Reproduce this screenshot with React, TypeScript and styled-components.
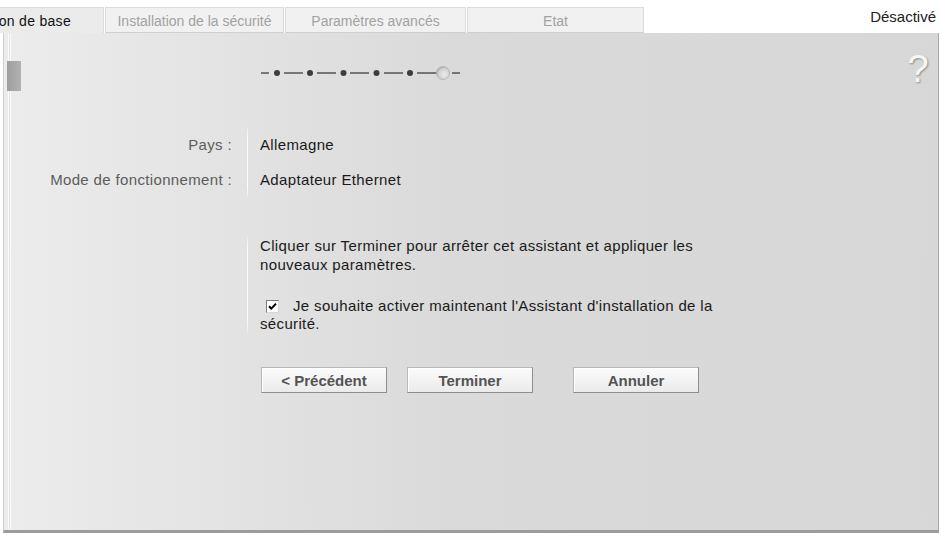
import React from "react";
import styled, { createGlobalStyle } from "styled-components";

const GlobalStyle = createGlobalStyle`
  html, body {
    margin: 0;
    padding: 0;
    background: #fff;
  }
  body {
    font-family: "Liberation Sans", Arial, sans-serif;
    color: #1a1a1a;
  }
`;

const tabs = [
  { name: "Installation de base", width: 104, active: true },
  { name: "Installation de la sécurité", width: 179 },
  { name: "Paramètres avancés", width: 181 },
  { name: "Etat", width: 177 }
];

export default function App() {
  return (
    <>
      <GlobalStyle />
      <Page>
        <TabBar>
          {tabs.map(({ name, width, active }) => (
            <Tab key={name} $active={active} $width={width}>
              {name}
            </Tab>
          ))}
          <Status>Désactivé</Status>
        </TabBar>

        <Panel>
          <Header>
            <Handle />
            <Progress />
            <Help>?</Help>
          </Header>

          <Section>
            <LabelCol>
              <Row>Pays :</Row>
              <Row>Mode de fonctionnement :</Row>
            </LabelCol>
            <Divider />
            <ValueCol>
              <Row $dark>Allemagne</Row>
              <Row $dark>Adaptateur Ethernet</Row>
            </ValueCol>
          </Section>

          <Section $top={32} $pad="7px 0 12px 0">
            <LabelCol />
            <Divider />
            <ValueCol>
              <Text $lineHeight={19}>
                Cliquer sur Terminer pour arrêter cet assistant et appliquer les
                nouveaux paramètres.
              </Text>
              <Text $lineHeight={18} $top={23}>
                <CheckBox>
                  <svg width="11" height="11" viewBox="0 0 11 11">
                    <path
                      d="M2 5.2 L4.3 7.6 L9 2.6"
                      fill="none"
                      stroke="#000"
                      strokeWidth="2"
                    />
                  </svg>
                </CheckBox>
                Je souhaite activer maintenant l'Assistant d'installation de la
                sécurité.
              </Text>
            </ValueCol>
          </Section>

          <ButtonRow>
            <Button>&lt; Précédent</Button>
            <Button $before={20}>Terminer</Button>
            <Button $before={40}>Annuler</Button>
          </ButtonRow>
        </Panel>
      </Page>
    </>
  );
}

function Progress() {
  const dots = [277, 310, 343.5, 376.5, 410];
  return (
    <ProgressSvg width="206" height="16" viewBox="258 65 206 16">
      <defs>
        <radialGradient id="knob" cx="0.6" cy="0.6" r="0.7">
          <stop offset="0" stopColor="#ededed" />
          <stop offset="0.6" stopColor="#d2d2d2" />
          <stop offset="1" stopColor="#9a9a9a" />
        </radialGradient>
      </defs>
      <g stroke="#4a4a4a" strokeWidth="1.4">
        <line x1="261" y1="73" x2="269" y2="73" />
        <line x1="284" y1="73" x2="303" y2="73" />
        <line x1="317" y1="73" x2="336" y2="73" />
        <line x1="350" y1="73" x2="369" y2="73" />
        <line x1="384" y1="73" x2="403" y2="73" />
        <line x1="417" y1="73" x2="437" y2="73" />
        <line x1="452" y1="73" x2="460" y2="73" />
      </g>
      {dots.map(x => (
        <circle key={x} cx={x} cy="73" r="3" fill="#3c3c3c" />
      ))}
      <circle cx="443" cy="73" r="6.5" fill="url(#knob)" stroke="#b0b0b0" strokeWidth="0.8" />
    </ProgressSvg>
  );
}

const Page = styled.div`
  width: 942px;
  height: 535px;
  overflow: hidden;
  display: flex;
  flex-direction: column;
`;

const TabBar = styled.div`
  height: 33px;
  flex-shrink: 0;
  display: flex;
  align-items: flex-end;
`;

const Tab = styled.div<{ $active?: boolean; $width: number }>`
  box-sizing: border-box;
  width: ${p => p.$width}px;
  height: 26px;
  margin-right: 1px;
  display: flex;
  align-items: center;
  justify-content: ${p => (p.$active ? "flex-end" : "center")};
  padding-right: ${p => (p.$active ? "32px" : "0")};
  padding-top: 1px;
  overflow: hidden;
  white-space: nowrap;
  font-size: 14px;
  letter-spacing: ${p => (p.$active ? "0.3px" : "0")};
  color: ${p => (p.$active ? "#111" : "#a2a2a2")};
  background: ${p => (p.$active ? "#ebebeb" : "#f1f1f1")};
  border: 1px solid #dcdcdc;
  border-bottom: ${p => (p.$active ? "none" : "1px solid #cfcfcf")};
  border-left: ${p => (p.$active ? "none" : "1px solid #dcdcdc")};
`;

const Status = styled.div`
  margin-left: auto;
  align-self: flex-start;
  margin-top: 8px;
  padding-right: 6px;
  font-size: 15px;
  color: #222;
`;

const Panel = styled.div`
  box-sizing: content-box;
  width: 934px;
  height: 497px;
  margin-left: 3px;
  border-left: 1px solid #cfcfcf;
  border-right: 1px solid #a8a8a8;
  border-bottom: 3px solid #9c9c9c;
  background: linear-gradient(to right, #ececec 0%, #dadada 48%, #d7d7d7 100%);
  box-shadow: inset 4px 0 0 #ececec, inset 5px 0 0 #fbfbfb, inset 6px 0 0 #e4e4e4,
    inset 7px 0 0 #fbfbfb;
  display: flex;
  flex-direction: column;
  font-size: 15px;
  letter-spacing: 0.35px;
`;

const Header = styled.div`
  height: 93px;
  flex-shrink: 0;
  display: flex;
  align-items: flex-start;
`;

const Handle = styled.div`
  width: 14px;
  height: 30px;
  margin: 28px 0 0 3px;
  background: linear-gradient(to right, #9e9e9e, #b2b2b2);
`;

const ProgressSvg = styled.svg`
  display: block;
  margin: 32px 0 0 237px;
`;

const Help = styled.div`
  margin: 17px 9px 0 auto;
  font-size: 38px;
  line-height: 38px;
  color: #f6f6f6;
  text-shadow: 1px 1px 2px #8c8c8c;
`;

const Section = styled.div<{ $top?: number; $pad?: string }>`
  display: flex;
  margin-top: ${p => p.$top || 0}px;
  padding: ${p => p.$pad || "1px 0 0 0"};
`;

const LabelCol = styled.div`
  width: 228px;
  flex-shrink: 0;
  text-align: right;
  color: #5c5c5c;
`;

const Divider = styled.div`
  width: 1px;
  margin-left: 15px;
  background: linear-gradient(to bottom, rgba(255, 255, 255, 0.3), #fafafa 15%, #fafafa 85%, rgba(255, 255, 255, 0.3));
`;

const ValueCol = styled.div`
  width: 475px;
  padding-left: 12px;
`;

const Row = styled.div<{ $dark?: boolean }>`
  height: 35px;
  display: flex;
  align-items: center;
  justify-content: ${p => (p.$dark ? "flex-start" : "flex-end")};
  color: ${p => (p.$dark ? "#1a1a1a" : "#5c5c5c")};
`;

const Text = styled.p<{ $lineHeight: number; $top?: number }>`
  margin: ${p => p.$top || 0}px 0 0 0;
  line-height: ${p => p.$lineHeight}px;
  color: #1a1a1a;
`;

const CheckBox = styled.span`
  box-sizing: border-box;
  display: inline-flex;
  align-items: center;
  justify-content: center;
  width: 13px;
  height: 13px;
  margin: 0 14px 0 6px;
  vertical-align: -1px;
  background: #fff;
  border: 1px solid #7a7a7a;
  border-right-color: #d8d8d8;
  border-bottom-color: #d8d8d8;
`;

const ButtonRow = styled.div`
  display: flex;
  margin-top: 22px;
  padding-left: 257px;
`;

const Button = styled.button<{ $before?: number }>`
  box-sizing: border-box;
  width: 126px;
  height: 26px;
  margin: 0 0 0 ${p => p.$before || 0}px;
  padding: 0;
  font-family: "Liberation Sans", Arial, sans-serif;
  font-size: 15px;
  font-weight: bold;
  letter-spacing: 0;
  color: #545454;
  background: linear-gradient(to bottom, #fbfbfb, #ebebeb);
  border: 1px solid #b8b8b8;
  border-right-color: #8e8e8e;
  border-bottom-color: #8e8e8e;
  box-shadow: inset 1px 1px 0 #fff;
`;
